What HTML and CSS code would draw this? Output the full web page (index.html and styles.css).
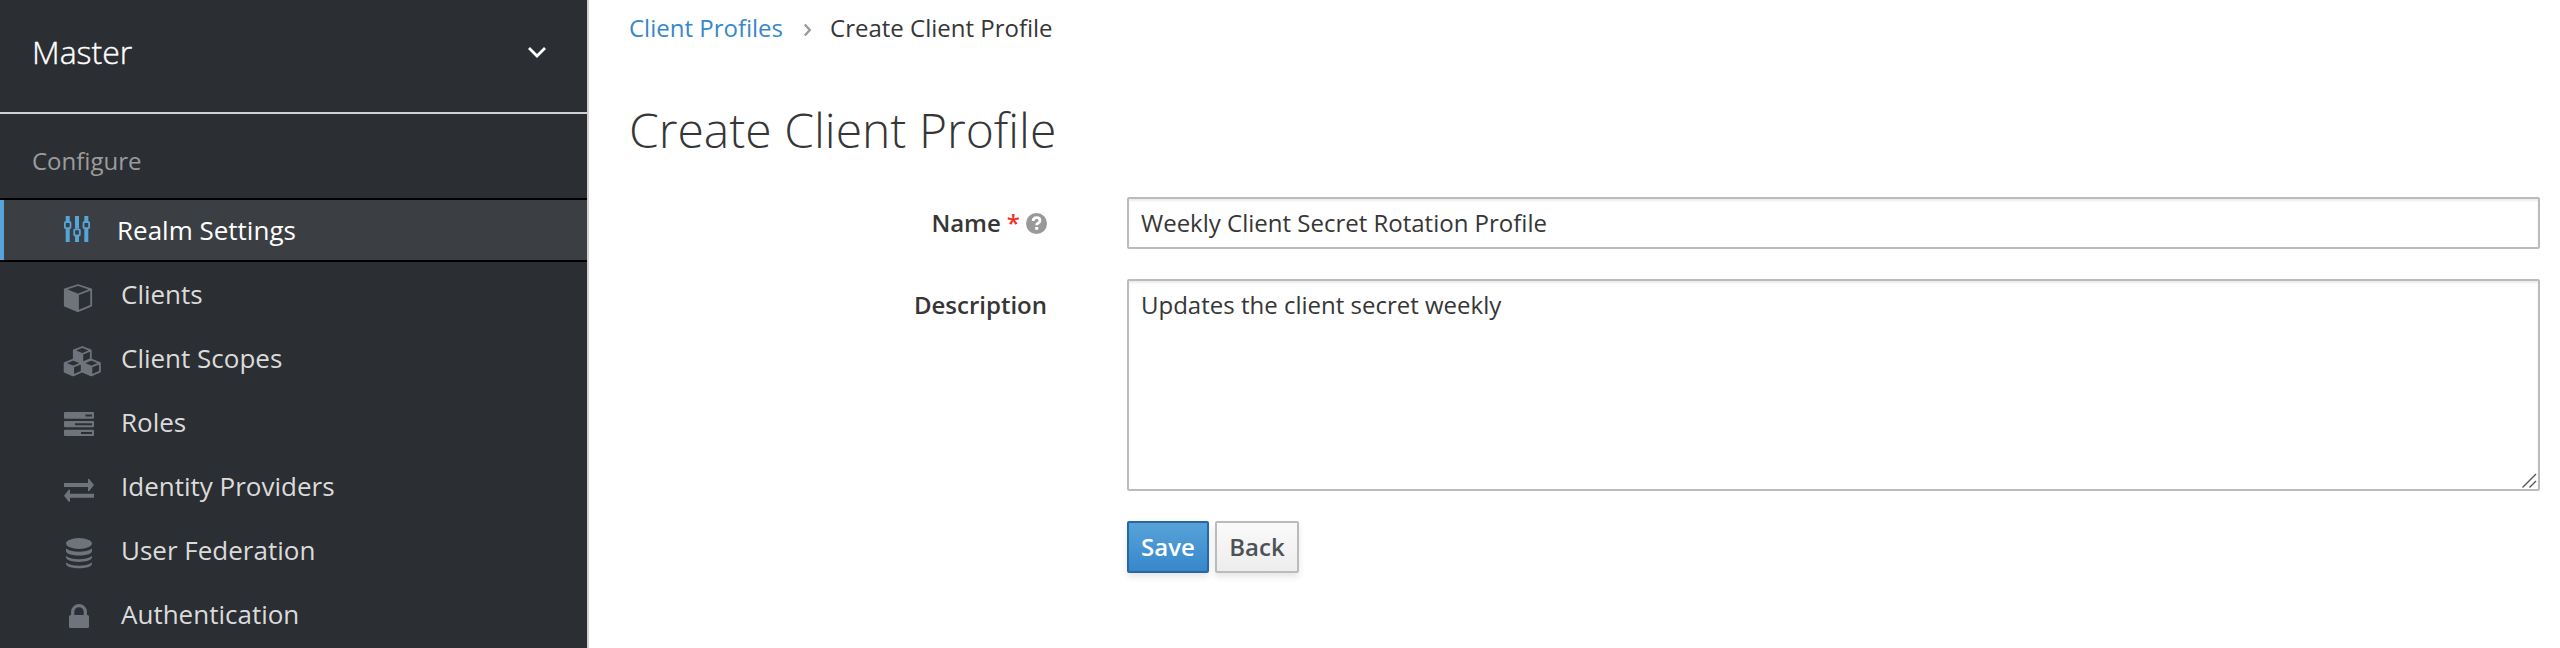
FILE: index.html
```html
<!DOCTYPE html>
<html lang="en">
<head>
<meta charset="utf-8">
<title>Create Client Profile</title>
<link rel="stylesheet" href="styles.css">
</head>
<body>
<div class="app">
  <aside class="sidebar">
    <div class="realm">
      <span>Master</span>
      <svg class="realm-caret" viewBox="0 0 20 14"><path d="M2 3l8 8 8-8"/></svg>
    </div>
    <h2 class="nav-title">Configure</h2>
    <nav class="nav">
      <a class="nav-item active">
        <svg class="icon" viewBox="0 2 50 60">
          <path d="M5.7 18h4v5.300h-4zM5.700 31h4v13h-4zM15 18h4v12.500h-4zM15 38h4v6h-4zM24.300 18h4v5.300h-4zM24.300 31h4v13h-4z"/>
          <g class="line"><rect x="4.900" y="24" width="5.600" height="6.200" rx="1"/><rect x="14.200" y="31.300" width="5.600" height="6.200" rx="1"/><rect x="23.500" y="24" width="5.600" height="6.200" rx="1"/></g>
        </svg><span>Realm Settings</span></a>
      <a class="nav-item">
        <svg class="icon" viewBox="0 2 50 60">
          <path d="M4 27l14 5.500v17.500l-14-6z"/>
          <path class="line" d="M18 23l13.200 4.300v16.400l-13.200 5.500-13.200-5.500v-16.400zM4.800 27.300l13.200 5.200 13.200-5.200M18 32.500v16"/>
        </svg><span>Clients</span></a>
      <a class="nav-item">
        <svg class="icon" viewBox="0 2 50 60">
          <g id="cube"><path d="M13 24l9.300 4v9.500l-9.300-4z"/><path class="line" d="M22.300 21l8.500 3.400v8.600l-8.500 3.700-8.500-3.700v-8.600zM13.800 24.400l8.500 3.600 8.500-3.600M22.300 28v8.500"/></g>
          <use href="#cube" x="-9.100" y="12.700"/><use href="#cube" x="9.100" y="12.700"/>
        </svg><span>Client Scopes</span></a>
      <a class="nav-item">
        <svg class="icon" viewBox="0 2 50 60">
          <path fill-rule="evenodd" d="M5 22h28q1 0 1 1v4.700q0 1-1 1h-28q-1 0-1-1v-4.700q0-1 1-1zM25.500 24.500v2h6.500v-2zM5 31h28q1 0 1 1v4.200q0 1-1 1h-28q-1 0-1-1v-4.200q0-1 1-1zM15 33.200v2h17v-2zM5 39.700h28q1 0 1 1v4.300q0 1-1 1h-28q-1 0-1-1v-4.300q0-1 1-1zM21 42v2h11v-2z"/>
        </svg><span>Roles</span></a>
      <a class="nav-item">
        <svg class="icon" viewBox="0 2 50 60">
          <path d="M4 29h24v-4l1-.2 5 6.200-5 6.200-1-.2v-4h-24zM34 39.700h-24v-4l-1-.2-5 6.200 5 6.200 1-.2v-4h24z"/>
        </svg><span>Identity Providers</span></a>
      <a class="nav-item">
        <svg class="icon" viewBox="0 2 50 60">
          <ellipse cx="19" cy="25.500" rx="13" ry="5.400"/>
          <path d="M6 30.500q5 3.300 13 3.300t13-3.300v2.500c0 6-26 6-26 0zM6 38q5 3.300 13 3.300t13-3.300v1c0 6.500-26 6.500-26 0zM6 44.500q5 3.300 13 3.300t13-3.300v1.200c0 6-26 6-26 0z"/>
        </svg><span>User Federation</span></a>
      <a class="nav-item">
        <svg class="icon" viewBox="0 2 50 60">
          <rect x="9" y="33" width="20" height="13" rx="1.500"/>
          <path class="shackle" d="M12.700 34v-4.300a6.300 6 0 0 1 12.600 0v4.300"/>
        </svg><span>Authentication</span></a>
    </nav>
  </aside>
  <main class="content">
    <div class="breadcrumb">
      <a class="crumb-link">Client Profiles</a>
      <svg class="crumb-sep" viewBox="0 0 9 14"><path d="M1.800 1.500l5 5.500-5 5.500"/></svg>
      <span>Create Client Profile</span>
    </div>
    <h1 class="title">Create Client Profile</h1>
    <form class="form">
      <label class="label" for="name">Name <span class="required">*</span>
        <svg class="help" viewBox="0 0 21 21"><circle cx="10.500" cy="10.500" r="10.500"/><path d="M7 8q.4-3.300 3.600-3.300 3.300 0 3.300 2.800 0 1.500-1.700 2.500-1.500.8-1.500 2.300"/><rect x="9.200" y="14" width="3" height="2.800"/></svg>
      </label>
      <input class="field" id="name" type="text" value="Weekly Client Secret Rotation Profile">
      <label class="label" for="description">Description</label>
      <div class="area-wrap">
        <textarea class="field area" id="description">Updates the client secret weekly</textarea>
        <svg class="grip" viewBox="0 0 15 15"><path d="M.5 14.500l13.500-13.500M7.500 14.500l6.500-6.500"/></svg>
      </div>
      <div class="actions">
        <button class="btn primary" type="button">Save</button>
        <button class="btn" type="button">Back</button>
      </div>
    </form>
  </main>
</div>
</body>
</html>
```
FILE: styles.css
```css
* { box-sizing: border-box; }
body {
  margin: 0;
  font-family: "Open Sans", sans-serif;
  font-size: 24px;
  color: #363636;
  background: #fff;
}
svg { display: block; flex: none; }
.app { display: flex; height: 648px; overflow: hidden; }

.sidebar {
  width: 589px;
  flex: none;
  background: #2b2e33;
  border-right: 2px solid #d1d1d4;
}
.realm {
  display: flex;
  justify-content: space-between;
  height: 114px;
  padding: 30px 40px 0 32px;
  border-bottom: 2px solid #d1d1d4;
  color: #fff;
  font-size: 32px;
  font-weight: 300;
  line-height: 44px;
  -webkit-text-stroke: .4px #fff;
}
.realm-caret { width: 20px; height: 14px; margin-top: 15px; }
.realm-caret path { fill: none; stroke: #fff; stroke-width: 2.8; }
.nav-title {
  height: 84px;
  margin: 0;
  padding: 30px 0 0 32px;
  color: #9c9c9c;
  font-size: 24px;
  font-weight: 400;
  line-height: 34px;
}
.nav-item {
  display: flex;
  height: 64px;
  padding-left: 60px;
  gap: 11px;
  border-top: 2px solid transparent;
  border-bottom: 2px solid transparent;
  color: #dbdbdb;
  font-size: 26px;
  line-height: 60px;
}
.nav-item.active {
  padding-left: 56px;
  gap: 7px;
  border-color: #000;
  background: #3b3f43;
  box-shadow: inset 4px 0 #56a5da;
  color: #fff;
}
.nav-item.active .icon { margin-left: 4px; color: #56a5da; }
.icon { width: 50px; height: 60px; color: #6f737c; fill: currentColor; }
.line { fill: none; stroke: currentColor; stroke-width: 1.8; stroke-linejoin: round; }
.shackle { fill: none; stroke: currentColor; stroke-width: 3.2; }

.content { flex: 1; padding: 11px 20px 0 40px; }
.breadcrumb { display: flex; align-items: center; height: 34px; line-height: 34px; }
.crumb-link { color: #3787ca; }
.crumb-sep { width: 9px; height: 14px; margin: 3px 18px 0 20px; }
.crumb-sep path { fill: none; stroke: #999; stroke-width: 2.3; }
.title { height: 66px; margin: 52px 0 34px; font-size: 48px; font-weight: 300; line-height: 66px; }

.form {
  display: grid;
  grid-template-columns: 418px 1413px;
  column-gap: 80px;
  row-gap: 30px;
}
.label {
  display: flex;
  justify-content: flex-end;
  align-items: center;
  gap: 6px;
  height: 52px;
  padding-bottom: 2px;
  font-weight: 600;
}
.required { color: #f3301f; }
.help { width: 21px; height: 21px; margin-top: 2px; }
.help circle { fill: #999; }
.help path { fill: none; stroke: #fff; stroke-width: 2.8; }
.help rect { fill: #fff; }
.field {
  display: block;
  width: 100%;
  height: 52px;
  margin: 0;
  padding: 0 12px 2px;
  border: 2px solid #bbb;
  border-radius: 2px;
  outline: 0;
  background: #fff;
  box-shadow: inset 0 2px 2px rgba(3, 3, 3, .075);
  color: #363636;
  font: inherit;
}
.area-wrap { position: relative; height: 212px; }
.area { height: 212px; padding-top: 7px; line-height: 34px; resize: none; }
.grip { position: absolute; right: 3px; bottom: 3px; width: 15px; height: 15px; }
.grip path { fill: none; stroke: #555; stroke-width: 1.4; }
.actions { grid-column: 2; display: flex; gap: 6px; }
.btn {
  width: 84px;
  height: 52px;
  padding: 0;
  border: 2px solid #bbb;
  border-radius: 2px;
  background: linear-gradient(#fafafa, #ededed);
  box-shadow: 0 4px 6px rgba(3, 3, 3, .1);
  color: #4d5258;
  font: 600 24px/34px "Open Sans", sans-serif;
}
.btn.primary {
  width: 82px;
  border-color: #2a669f;
  background: linear-gradient(#57a3d9, #3787ca);
  color: #fff;
}
```
